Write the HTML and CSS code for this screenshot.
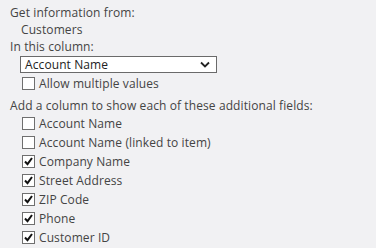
FILE: index.html
```html
<!DOCTYPE html>
<html lang="en">

<head>
    <meta charset="UTF-8">
    <title>Lookup Column Settings</title>
    <link rel="stylesheet" href="styles.css">
</head>

<body>
    <div class="panel">
        <div class="label">Get information from:</div>
        <div class="value">Customers</div>

        <div class="label">In this column:</div>
        <div class="select">
            <span>Account Name</span>
            <svg width="10" height="7" viewBox="0 0 10 7"><path d="M1 1.5 L5 5.5 L9 1.5" fill="none" stroke="#222" stroke-width="1.8"/></svg>
        </div>
        <div class="check single"><span class="box"></span>Allow multiple values</div>

        <div class="label extra">Add a column to show each of these additional fields:</div>
        <div class="fields">
            <div class="check"><span class="box"></span>Account Name</div>
            <div class="check"><span class="box"></span>Account Name (linked to item)</div>
            <div class="check"><span class="box on"><svg width="11" height="11" viewBox="0 0 11 11"><path d="M2 5.5 L4.5 8.2 L9 2" fill="none" stroke="#111" stroke-width="2"/></svg></span>Company Name</div>
            <div class="check"><span class="box on"><svg width="11" height="11" viewBox="0 0 11 11"><path d="M2 5.5 L4.5 8.2 L9 2" fill="none" stroke="#111" stroke-width="2"/></svg></span>Street Address</div>
            <div class="check"><span class="box on"><svg width="11" height="11" viewBox="0 0 11 11"><path d="M2 5.5 L4.5 8.2 L9 2" fill="none" stroke="#111" stroke-width="2"/></svg></span>ZIP Code</div>
            <div class="check"><span class="box on"><svg width="11" height="11" viewBox="0 0 11 11"><path d="M2 5.5 L4.5 8.2 L9 2" fill="none" stroke="#111" stroke-width="2"/></svg></span>Phone</div>
            <div class="check"><span class="box on"><svg width="11" height="11" viewBox="0 0 11 11"><path d="M2 5.5 L4.5 8.2 L9 2" fill="none" stroke="#111" stroke-width="2"/></svg></span>Customer ID</div>
        </div>
    </div>
</body>

</html>
```

FILE: styles.css
```css
body {
    margin: 0;
    background: #f1f1f3;
    font-family: 'Open Sans', 'Segoe UI', sans-serif;
    font-size: 12px;
    letter-spacing: 0.1px;
    color: #444;
}

.panel {
    padding: 4px 10px 0;
}

.label {
    line-height: 17px;
}

.value {
    line-height: 17px;
    padding-left: 11px;
}

.select {
    display: flex;
    align-items: center;
    justify-content: space-between;
    box-sizing: border-box;
    width: 197px;
    height: 17px;
    margin: 1px 0 0 10px;
    padding: 0 6px 0 4px;
    background: #fff;
    border: 1px solid #6a6a6a;
    color: #222;
}

.check {
    display: flex;
    align-items: center;
    gap: 4px;
    height: 19px;
    padding-left: 12px;
}

.check.single {
    margin-top: 1px;
}

.label.extra {
    margin-top: 4px;
}

.box {
    display: flex;
    align-items: center;
    justify-content: center;
    box-sizing: border-box;
    width: 13px;
    height: 13px;
    background: #fff;
    border: 1px solid #6f6f6f;
}
```
